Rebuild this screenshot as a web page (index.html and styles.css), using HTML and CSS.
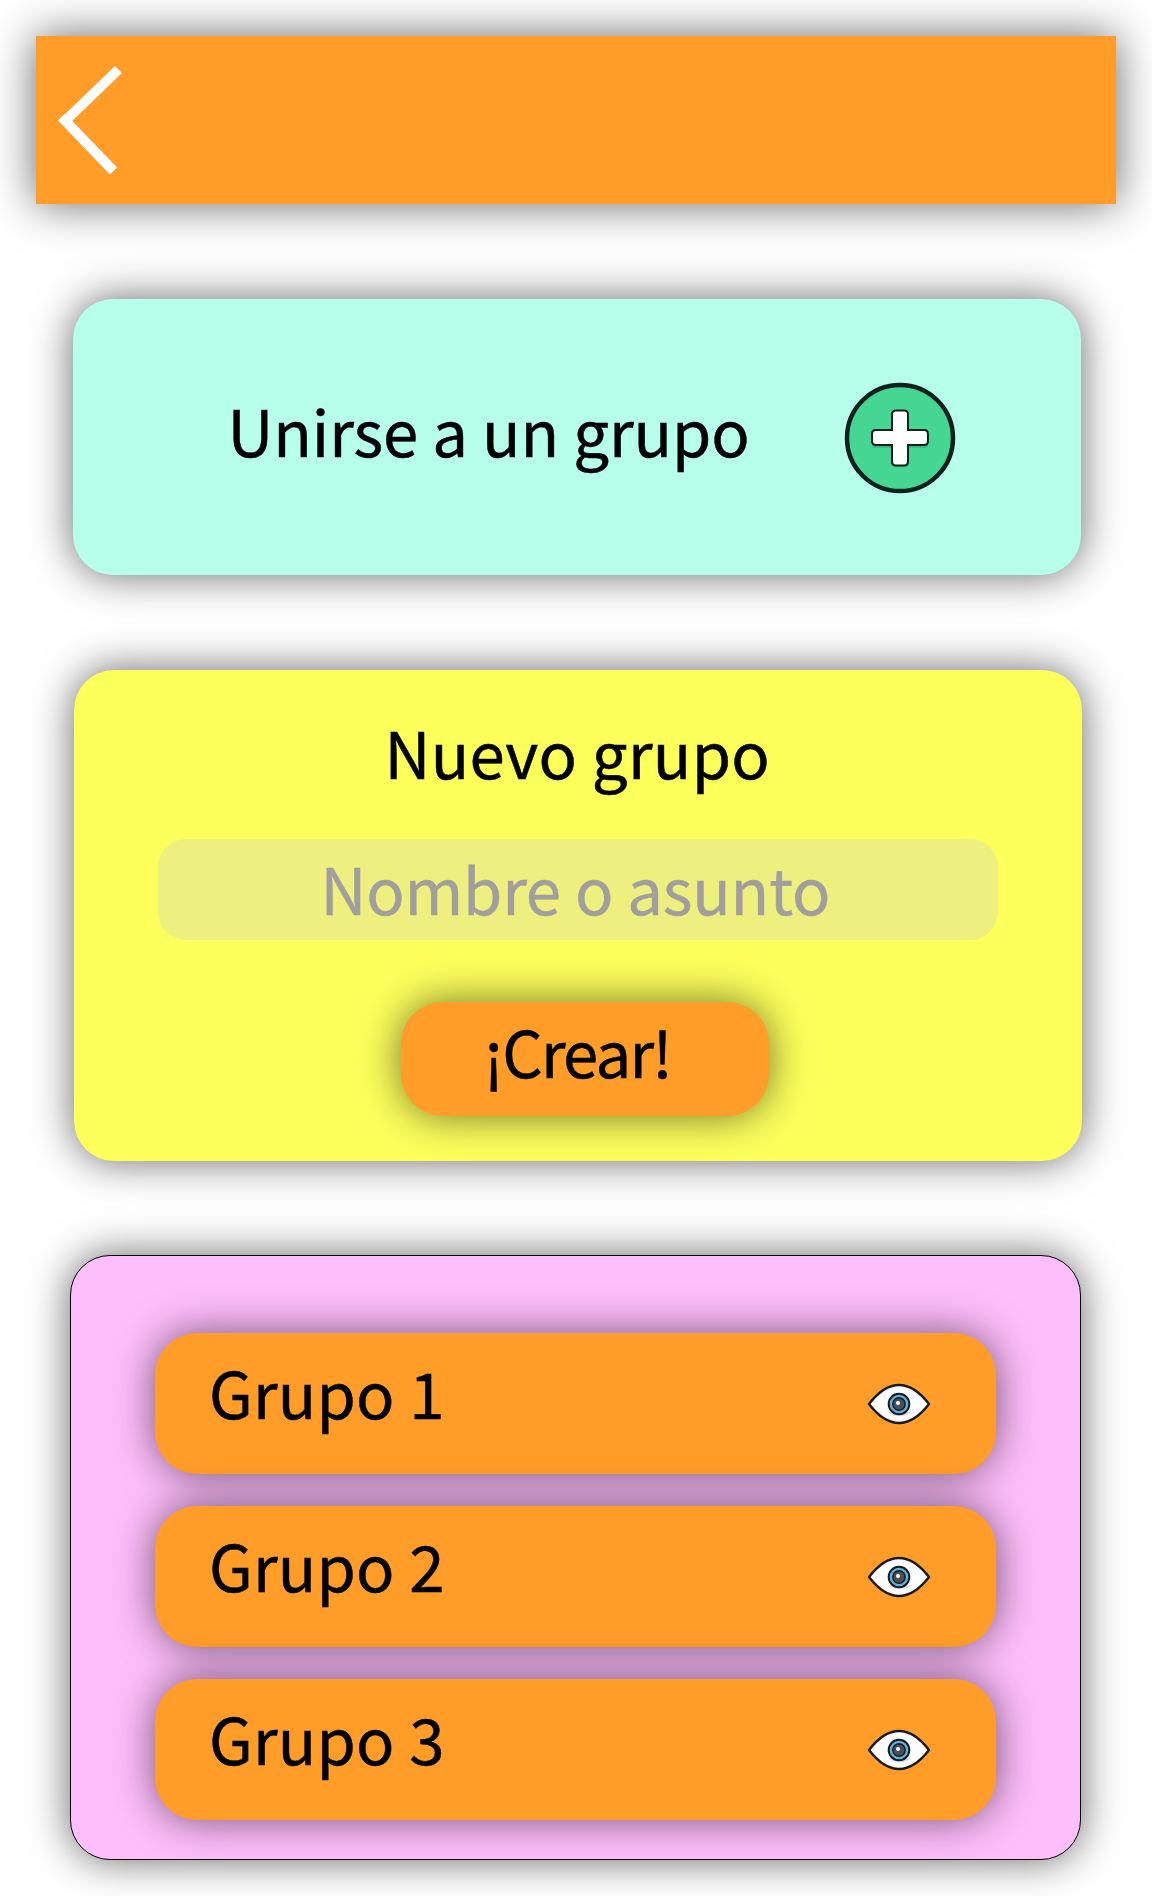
FILE: index.html
```html
<!DOCTYPE html>
<html lang="es">
<head>
<meta charset="utf-8">
<title>Grupos</title>
<link rel="stylesheet" href="styles.css">
</head>
<body>
<svg class="defs" aria-hidden="true">
  <symbol id="eye" viewBox="0 0 64 42">
    <path d="M2 21C12 8 22 2 32 2s20 6 30 19C52 34 42 40 32 40S12 34 2 21Z" fill="#fff" stroke="#17191c" stroke-width="2.4" stroke-linejoin="round"/>
    <path d="M21 29a14 10 0 0 0 23 0Z" fill="#d9dcdf"/>
    <circle cx="32" cy="21" r="10.300" fill="#60b1dc" stroke="#17191c" stroke-width="2"/>
    <circle cx="32" cy="21" r="6.2" fill="#485057" stroke="#17191c" stroke-width="1.4"/>
    <circle cx="31" cy="20" r="2" fill="#fff"/>
  </symbol>
</svg>
<header class="topbar">
  <svg class="back" viewBox="0 0 66 111"><path d="M60.500 4.500 6.500 56.500"/><path d="M3.500 52 55.500 106"/></svg>
</header>
<main class="content">
  <section class="card join">
    <span class="text join-text">Unirse a un grupo</span>
    <svg class="plus" viewBox="0 0 112 112">
      <circle cx="56" cy="56" r="53" fill="#46d694"/>
      <path d="M17 91a53 53 0 0 0 78 0 51 51 0 0 1-78 0Z" fill="#3cb883"/>
      <circle cx="56" cy="56" r="53" fill="none" stroke="#10201c" stroke-width="4.500"/>
      <path d="M51 32h10q3 0 3 3v14h17q3 0 3 3v11q0 3-3 3H64v16q0 3-3 3H51q-3 0-3-3V66H31q-3 0-3-3V52q0-3 3-3h17V35q0-3 3-3Z" fill="#3cba80"/>
      <path d="M52 28.500h8q4 0 4 4V48h16q4 0 4 4v7q0 4-4 4H64v16.500q0 4-4 4h-8q-4 0-4-4V63H32q-4 0-4-4v-7q0-4 4-4h16V32.500q0-4 4-4Z" fill="#fff" stroke="#10201c" stroke-width="2"/>
    </svg>
  </section>
  <section class="card create">
    <h1 class="text create-title">Nuevo grupo</h1>
    <div class="field"><span class="text field-text">Nombre o asunto</span></div>
    <button class="button"><span class="text button-text">¡Crear!</span></button>
  </section>
  <section class="card groups">
    <div class="group"><span class="text group-text">Grupo 1</span><svg class="eye"><use href="#eye"/></svg></div>
    <div class="group"><span class="text group-text">Grupo 2</span><svg class="eye"><use href="#eye"/></svg></div>
    <div class="group"><span class="text group-text">Grupo 3</span><svg class="eye"><use href="#eye"/></svg></div>
  </section>
</main>
</body>
</html>
```
FILE: styles.css
```css
* { box-sizing: border-box; }
body {
  margin: 0;
  height: 1896px;
  padding: 36px;
  overflow: hidden;
  background: #fff;
  color: #000;
  font-family: "Noto Sans CJK SC", "Noto Sans", sans-serif;
}
.defs { display: none; }
.text {
  font-size: 63.500px;
  font-weight: 400;
  line-height: 80px;
  white-space: nowrap;
  -webkit-text-stroke: .5px currentColor;
}
.topbar {
  height: 168px;
  padding: 29px 0 0 22px;
  background: #ff9d28;
  box-shadow: 0 0 42px rgba(0, 0, 0, .6);
}
.back { display: block; width: 66px; height: 111px; fill: none; stroke: #fff; stroke-width: 10px; }
.content { display: flex; flex-direction: column; gap: 95px; padding: 95px 34px 0 36.500px; }
.card { width: 1008px; border-radius: 40px; box-shadow: 0 0 42px rgba(0, 0, 0, .6); }
.join { display: flex; height: 276px; background: #b5ffeb; }
.join-text { width: 616px; padding: 90px 0 0 155px; letter-spacing: -.1px; }
.plus { width: 112px; height: 112px; margin: 83px 0 0 155.500px; }
.create {
  display: flex;
  flex-direction: column;
  height: 491px;
  margin-left: 1px;
  background: #fdff5b;
}
.create-title { margin: 41px 0 48px 311px; letter-spacing: .3px; }
.field { width: 840px; height: 101px; margin-left: 84px; padding: 8px 0 0 163px; border-radius: 28px; background: #edef7e; }
.field-text { display: block; color: #a19e9e; letter-spacing: -.2px; }
.button {
  display: flex;
  align-items: flex-start;
  width: 368px;
  height: 114px;
  margin: 62px 0 0 327px;
  padding: 8px 0 0 83px;
  border: 0;
  border-radius: 42px;
  background: #ff9d28;
  box-shadow: 0 0 42px rgba(0, 0, 0, .55);
  color: #000;
  font-family: inherit;
}
.button-text { letter-spacing: -1.800px; }
.groups {
  display: flex;
  flex-direction: column;
  gap: 32px;
  width: 1011px;
  height: 605px;
  margin: -1px 0 0 -2.500px;
  padding: 77px 0 0 84px;
  border: 1px solid #000;
  background: #febdfb;
}
.group {
  display: flex;
  width: 841px;
  height: 141px;
  padding: 18px 0 0 54px;
  border-radius: 42px;
  background: #ff9d28;
  box-shadow: 0 0 42px rgba(0, 0, 0, .55);
}
.group-text { width: 658px; letter-spacing: .2px; }
.eye { width: 64px; height: 42px; margin-top: 32px; }
```
